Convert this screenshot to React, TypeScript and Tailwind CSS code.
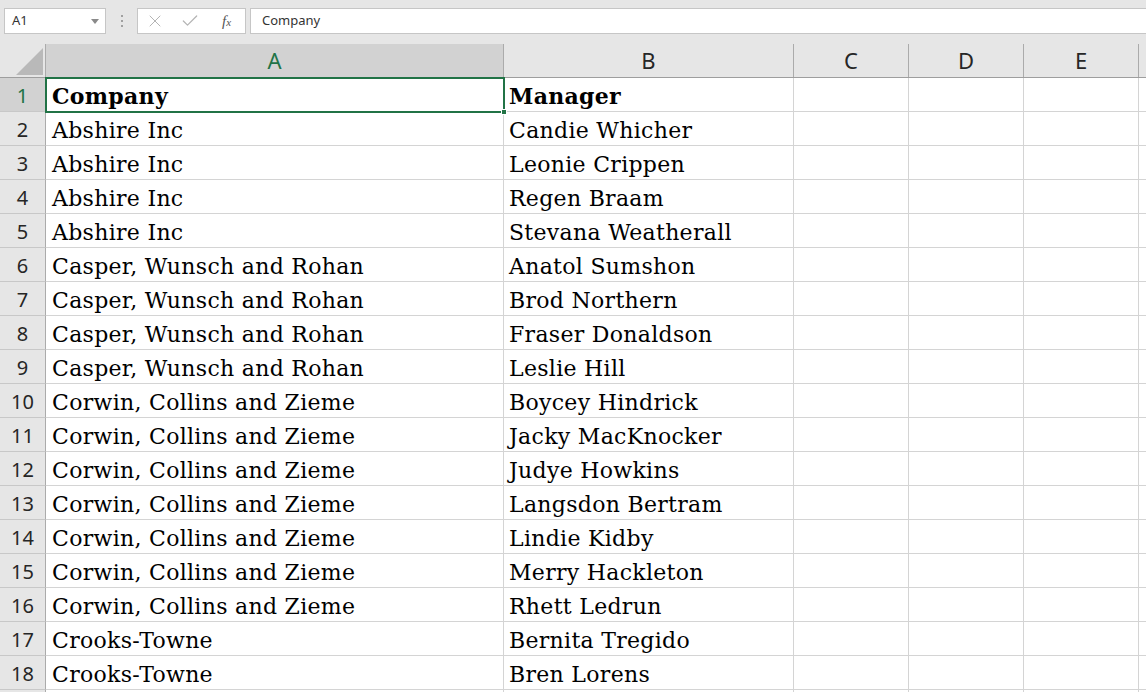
import { Check, X } from "lucide-react";

const rows: [string, string][] = [
  ["Company", "Manager"],
  ["Abshire Inc", "Candie Whicher"],
  ["Abshire Inc", "Leonie Crippen"],
  ["Abshire Inc", "Regen Braam"],
  ["Abshire Inc", "Stevana Weatherall"],
  ["Casper, Wunsch and Rohan", "Anatol Sumshon"],
  ["Casper, Wunsch and Rohan", "Brod Northern"],
  ["Casper, Wunsch and Rohan", "Fraser Donaldson"],
  ["Casper, Wunsch and Rohan", "Leslie Hill"],
  ["Corwin, Collins and Zieme", "Boycey Hindrick"],
  ["Corwin, Collins and Zieme", "Jacky MacKnocker"],
  ["Corwin, Collins and Zieme", "Judye Howkins"],
  ["Corwin, Collins and Zieme", "Langsdon Bertram"],
  ["Corwin, Collins and Zieme", "Lindie Kidby"],
  ["Corwin, Collins and Zieme", "Merry Hackleton"],
  ["Corwin, Collins and Zieme", "Rhett Ledrun"],
  ["Crooks-Towne", "Bernita Tregido"],
  ["Crooks-Towne", "Bren Lorens"],
  ["", ""],
];

const uiFont = "font-['Noto_Sans','Open_Sans',sans-serif]";
const cellFont = "font-['DejaVu_Serif','Liberation_Serif',serif]";

const FormulaBar = () => (
  <div className={`flex h-[44px] items-start bg-[#e6e6e6] pt-[8px] pl-[4px] ${uiFont}`}>
    {/* Name box */}
    <div className="flex h-[26px] w-[102px] items-center justify-between border border-[#c6c6c6] bg-white pl-[7px] pr-[6px] text-[13px] text-[#333]">
      <span>A1</span>
      <svg width="8" height="5" viewBox="0 0 8 5">
        <path d="M0 0h8L4 5z" fill="#8a8a8a" />
      </svg>
    </div>

    {/* grip dots */}
    <div className="flex h-[26px] w-[31px] flex-col items-center justify-center gap-[3px]">
      <span className="h-[2px] w-[2px] bg-[#a0a0a0]" />
      <span className="h-[2px] w-[2px] bg-[#a0a0a0]" />
      <span className="h-[2px] w-[2px] bg-[#a0a0a0]" />
    </div>

    {/* cancel / enter / fx */}
    <div className="flex h-[26px] w-[109px] items-center border border-[#c6c6c6] bg-white pl-[7px]">
      <X size={20} strokeWidth={1.2} className="text-[#b4b4b4]" />
      <Check size={20} strokeWidth={1.5} className="ml-[15px] text-[#b4b4b4]" />
      <span className="ml-[22px] font-['Liberation_Serif',serif] text-[15px] italic leading-none text-[#555]">
        f<span className="text-[11px]">x</span>
      </span>
    </div>

    {/* formula input */}
    <div className="ml-[4px] flex h-[26px] flex-1 items-center border border-[#c6c6c6] border-r-0 bg-white pl-[11px] text-[13px] text-[#333]">
      Company
    </div>
  </div>
);

const colWidths = ["w-[458px]", "w-[290px]", "w-[115px]", "w-[115px]", "w-[115px]"];
const letters = ["A", "B", "C", "D", "E"];

const ColumnHeader = () => (
  <div className={`flex h-[34px] border-b border-[#9e9e9e] bg-[#e6e6e6] ${uiFont}`}>
    {/* corner */}
    <div className="flex w-[46px] shrink-0 items-end justify-end border-r border-[#ababab] pr-[2px] pb-[2px]">
      <svg width="27" height="27" viewBox="0 0 27 27">
        <path d="M27 0V27H0z" fill="#b9b9b9" />
      </svg>
    </div>
    {letters.map((l, i) => (
      <div
        key={l}
        className={`flex shrink-0 items-center justify-center border-r border-[#ababab] text-[22px] ${colWidths[i]} ${
          i === 0 ? "bg-[#d2d2d2] text-[#217346]" : "text-[#262626]"
        }`}
      >
        {l}
      </div>
    ))}
    <div className="flex-1" />
  </div>
);

export default function App() {
  return (
    <div className="h-[692px] w-[1146px] overflow-hidden bg-white">
      <FormulaBar />
      <ColumnHeader />

      <div className="relative">
        {rows.map(([company, manager], i) => (
          <div key={i} className="flex h-[34px]">
            <div
              className={`flex w-[46px] shrink-0 items-center justify-center border-r border-b border-r-[#ababab] border-b-[#c8c8c8] pt-[2px] text-[20px] ${uiFont} ${
                i === 0 ? "bg-[#d2d2d2] text-[#217346]" : "bg-[#e6e6e6] text-[#262626]"
              }`}
            >
              {i < 18 ? i + 1 : ""}
            </div>
            {[company, manager, "", "", ""].map((v, j) => (
              <div
                key={j}
                className={`shrink-0 overflow-hidden whitespace-nowrap border-r border-b border-[#d4d4d4] pt-[5px] text-[22px] leading-[27px] tracking-[0.3px] text-black ${cellFont} ${
                  colWidths[j]
                } ${j === 0 ? "pl-[6px]" : "pl-[5px]"} ${i === 0 ? "font-bold" : ""}`}
              >
                {v}
              </div>
            ))}
            <div className="flex-1 border-b border-[#d4d4d4]" />
          </div>
        ))}

        {/* active cell A1 */}
        <div className="pointer-events-none absolute top-[-1px] left-[45px] h-[36px] w-[460px] border-2 border-[#217346]" />
        <div className="pointer-events-none absolute top-[31px] left-[501px] h-[6px] w-[6px] border border-white bg-[#217346]" />
      </div>
    </div>
  );
}
